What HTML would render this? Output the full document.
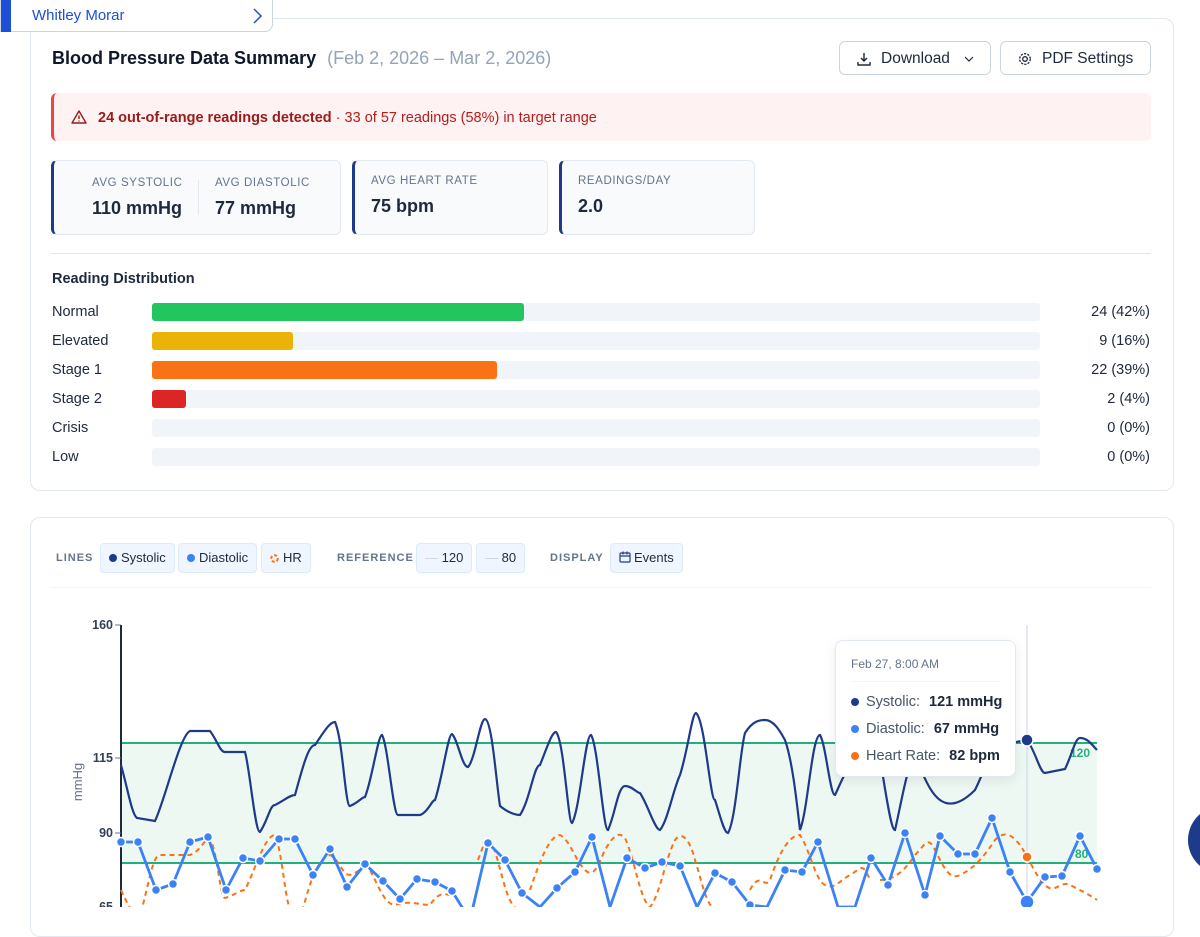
<!DOCTYPE html>
<html><head><meta charset="utf-8"><style>
*{box-sizing:border-box;margin:0;padding:0}
body{width:1200px;height:907px;overflow:hidden;background:#fff;font-family:"Liberation Sans",sans-serif;color:#1e293b;position:relative}
.abs{position:absolute}
.card{position:absolute;border:1px solid #e2e8f0;border-radius:10px;background:#fff}
.stat{position:absolute;top:160px;height:75px;border:1px solid #e2e8f0;border-left:3px solid #1e3a8a;border-radius:6px;background:#f8fafc}
.lbl{font-size:11.5px;letter-spacing:.6px;color:#64748b}
.val{font-size:18px;font-weight:bold;color:#1e293b}
.row{position:absolute;left:52px;font-size:14.5px;color:#1e293b}
.track{position:absolute;left:152px;width:888px;height:18px;background:#f1f5f9;border-radius:3px}
.bar{position:absolute;left:0;top:0;height:18px;border-radius:3px}
.cnt{position:absolute;right:50px;font-size:14.5px;color:#1e293b;text-align:right}
.chip{position:absolute;top:543px;height:30px;border:1px solid #dbeafe;background:#eff6ff;border-radius:4px;font-size:13px;color:#1e293b;line-height:28px;padding:0 8px}
.sec{position:absolute;top:552px;font-size:11px;letter-spacing:1px;color:#64748b;font-weight:bold}
.btn{position:absolute;top:41px;height:34px;border:1px solid #cbd5e1;border-radius:6px;font-size:15.5px;line-height:34px;color:#1e293b}
</style></head><body>

<div class="abs" style="left:0;top:0;width:273px;height:32px;border:1px solid #cbd5e1;border-top:none;border-radius:0 0 8px 0;background:#fff;z-index:2">
<div class="abs" style="left:0;top:0;width:10px;height:32px;background:#1d4ed8"></div>
<div class="abs" style="left:31px;top:7px;font-size:15px;color:#1d4ed8">Whitley Morar</div>
<svg class="abs" style="left:249px;top:6px" width="14" height="20" viewBox="0 0 14 20"><path d="M4 3 L11 10 L4 17" fill="none" stroke="#1d4ed8" stroke-width="1.5"/></svg>
</div>

<div class="card" style="left:30px;top:18px;width:1144px;height:473px"></div>
<div class="abs" style="left:52px;top:48px;font-size:18px;font-weight:bold;color:#0f172a">Blood Pressure Data Summary <span style="font-weight:normal;color:#94a3b8;margin-left:6px">(Feb 2, 2026 – Mar 2, 2026)</span></div>

<div class="btn" style="left:839px;width:152px">
<svg class="abs" style="left:16px;top:9px" width="16" height="16" viewBox="0 0 16 16"><path d="M8 2v8M5 7l3 3 3-3M2 11v3h12v-3" fill="none" stroke="#1e293b" stroke-width="1.4"/></svg>
<span style="position:absolute;left:41px">Download</span>
<svg class="abs" style="left:124px;top:12px" width="10" height="10" viewBox="0 0 10 10"><path d="M1 3l4 4 4-4" fill="none" stroke="#1e293b" stroke-width="1.2"/></svg></div>
<div class="btn" style="left:1000px;width:151px">
<svg class="abs" style="left:16px;top:9px" width="16" height="16" viewBox="0 0 16 16"><circle cx="8" cy="8" r="2.3" fill="none" stroke="#1e293b" stroke-width="1.3"/><circle cx="8" cy="8" r="5.3" fill="none" stroke="#1e293b" stroke-width="1.3" stroke-dasharray="2.2 1.2"/></svg>
<span style="position:absolute;left:41px">PDF Settings</span></div>

<div class="abs" style="left:51px;top:93px;width:1100px;height:48px;background:#fef2f2;border-left:3px solid #ef4444;border-radius:6px"></div>
<svg class="abs" style="left:71px;top:109px" width="16" height="16" viewBox="0 0 16 16"><path d="M8 2L15 14H1Z" fill="none" stroke="#991b1b" stroke-width="1.4" stroke-linejoin="round"/><path d="M8 6.5v3.5M8 11.5v1" stroke="#991b1b" stroke-width="1.4"/></svg>
<div class="abs" style="left:98px;top:110px;font-size:14.5px;color:#b91c1c"><b style="color:#991b1b">24 out-of-range readings detected</b> · 33 of 57 readings (58%) in target range</div>

<div class="stat" style="left:51px;width:290px"></div>
<div class="abs lbl" style="left:92px;top:177px">AVG SYSTOLIC</div>
<div class="abs val" style="left:92px;top:198px">110 mmHg</div>
<div class="abs" style="left:198px;top:180px;width:1px;height:35px;background:#e2e8f0"></div>
<div class="abs lbl" style="left:215px;top:177px">AVG DIASTOLIC</div>
<div class="abs val" style="left:215px;top:198px">77 mmHg</div>
<div class="stat" style="left:352px;width:196px"></div>
<div class="abs lbl" style="left:371px;top:175px">AVG HEART RATE</div>
<div class="abs val" style="left:371px;top:196px">75 bpm</div>
<div class="stat" style="left:559px;width:196px"></div>
<div class="abs lbl" style="left:578px;top:175px">READINGS/DAY</div>
<div class="abs val" style="left:578px;top:196px">2.0</div>

<div class="abs" style="left:51px;top:253px;width:1100px;height:1px;background:#e2e8f0"></div>
<div class="abs" style="left:52px;top:271px;font-size:14.5px;font-weight:bold;color:#1e293b">Reading Distribution</div>

<div class="row" style="top:304px">Normal</div><div class="track" style="top:303px"><div class="bar" style="width:372px;background:#22c55e"></div></div><div class="cnt" style="top:304px">24 (42%)</div>
<div class="row" style="top:333px">Elevated</div><div class="track" style="top:332px"><div class="bar" style="width:141px;background:#eab308"></div></div><div class="cnt" style="top:333px">9 (16%)</div>
<div class="row" style="top:362px">Stage 1</div><div class="track" style="top:361px"><div class="bar" style="width:345px;background:#f97316"></div></div><div class="cnt" style="top:362px">22 (39%)</div>
<div class="row" style="top:391px">Stage 2</div><div class="track" style="top:390px"><div class="bar" style="width:34px;background:#dc2626"></div></div><div class="cnt" style="top:391px">2 (4%)</div>
<div class="row" style="top:420px">Crisis</div><div class="track" style="top:419px"></div><div class="cnt" style="top:420px">0 (0%)</div>
<div class="row" style="top:449px">Low</div><div class="track" style="top:448px"></div><div class="cnt" style="top:449px">0 (0%)</div>

<div class="card" style="left:30px;top:517px;width:1144px;height:420px"></div>
<div class="sec" style="left:56px">LINES</div>
<div class="chip" style="left:100px"><span style="display:inline-block;width:8px;height:8px;border-radius:50%;background:#1e3a8a;margin-right:4px"></span>Systolic</div>
<div class="chip" style="left:178px"><span style="display:inline-block;width:8px;height:8px;border-radius:50%;background:#3b82f6;margin-right:4px"></span>Diastolic</div>
<div class="chip" style="left:261px"><svg width="9" height="9" viewBox="0 0 9 9" style="margin-right:4px;vertical-align:-1px"><circle cx="4.5" cy="4.5" r="3.3" fill="none" stroke="#f97316" stroke-width="2" stroke-dasharray="3 2"/></svg>HR</div>
<div class="sec" style="left:337px">REFERENCE</div>
<div class="chip" style="left:416px"><span style="color:#cbd5e1">—</span> 120</div>
<div class="chip" style="left:476px"><span style="color:#cbd5e1">—</span> 80</div>
<div class="sec" style="left:550px">DISPLAY</div>
<div class="chip" style="left:610px"><svg width="12" height="12" viewBox="0 0 12 12" style="vertical-align:-1px;margin-right:3px"><rect x="1" y="2" width="10" height="9" rx="1" fill="none" stroke="#1e3a8a" stroke-width="1.2"/><path d="M1 5h10M4 0.5v3M8 0.5v3" stroke="#1e3a8a" stroke-width="1.2"/></svg>Events</div>
<div class="abs" style="left:51px;top:587px;width:1100px;height:1px;background:#f1f5f9"></div>

<svg class="abs" style="left:0;top:0" width="1200" height="907">
<rect x="121" y="743" width="976" height="120" fill="#eef8f3"/>
<line x1="121" y1="743" x2="1097" y2="743" stroke="#22b07d" stroke-width="2"/>
<line x1="121" y1="863" x2="1097" y2="863" stroke="#22b07d" stroke-width="2"/>
<text x="1070" y="757" font-size="12" font-weight="bold" fill="#22b07d" font-family="Liberation Sans">120</text>
<text x="1075" y="858" font-size="12" font-weight="bold" fill="#22b07d" font-family="Liberation Sans">80</text>
<line x1="121" y1="625" x2="121" y2="907" stroke="#1e293b" stroke-width="2"/>
<g font-family="Liberation Sans" font-size="12.5" font-weight="bold" fill="#334155" text-anchor="end">
<text x="113" y="629">160</text><text x="113" y="762">115</text><text x="113" y="837">90</text><text x="113" y="911">65</text></g>
<g stroke="#64748b"><line x1="115" y1="625" x2="121" y2="625"/><line x1="115" y1="758" x2="121" y2="758"/><line x1="115" y1="833" x2="121" y2="833"/></g>
<text transform="translate(82,782) rotate(-90)" font-family="Liberation Sans" font-size="13" fill="#64748b" text-anchor="middle">mmHg</text>
<line x1="1027" y1="625" x2="1027" y2="907" stroke="#cbd5e1"/>
<path d="M121,765 C128,790 132,815 137,818 L155,821 C165,800 180,735 190,731 L210,731 C217,740 220,752 225,752 L245,752 C250,770 255,832 260,832 C268,820 270,805 275,805 C285,800 290,795 295,795 C302,770 308,745 315,745 C325,730 330,722 335,722 C343,740 345,806 350,806 C358,803 362,797 365,797 C372,780 378,735 382,735 C388,745 393,815 398,815 L420,815 C428,812 432,800 435,800 C442,780 448,734 452,734 C458,740 462,767 468,767 C475,760 480,719 485,719 C492,720 496,780 500,806 C505,810 512,815 520,815 C530,800 534,765 540,765 C548,745 552,732 556,732 C564,740 568,823 572,823 C580,810 585,735 591,735 C598,745 603,830 608,830 C615,815 618,786 625,786 C632,786 637,793 640,793 C648,805 655,830 660,830 C668,820 673,790 680,775 C688,750 692,713 696,713 C705,720 710,800 715,800 C720,815 724,833 728,833 C736,820 740,750 745,733 C752,722 758,720 765,720 C775,720 782,735 785,740 C792,760 796,795 800,830 C808,810 812,735 820,735 C826,745 830,795 835,795 C840,785 845,770 850,770 C858,760 862,720 868,715 C878,720 888,830 895,830 C902,800 908,760 915,760 C925,770 935,830 975,790 C985,770 992,745 1000,745 L1027,740 C1035,750 1040,773 1045,773 C1055,771 1060,770 1065,769 C1072,755 1075,738 1080,738 C1088,738 1092,745 1097,750" fill="none" stroke="#1e3a8a" stroke-width="2.2"/>
<path d="M121,890 C128,905 135,920 140,915 C148,890 152,855 160,855 L190,855 C200,852 205,838 210,838 C218,855 220,898 225,898 C235,895 240,890 245,890 C255,870 265,835 275,835 C282,850 286,907 290,907 M300,920 C308,890 315,860 330,855 C340,860 342,875 350,875 C360,872 365,863 370,870 C378,885 385,905 395,905 C410,900 420,905 430,905 C440,890 445,895 452,895 M478,860 C482,850 485,838 490,838 C500,860 505,900 515,907 M530,890 C540,860 550,835 560,835 C570,840 575,860 585,870 C595,880 600,860 605,850 C612,838 618,830 625,838 C635,860 640,900 650,907 C660,895 665,860 675,840 C682,830 690,840 695,860 C700,875 705,900 712,907 M750,890 C760,870 765,890 770,880 C780,850 790,835 800,835 C810,850 815,880 825,885 C835,890 840,880 850,875 C860,870 862,860 870,880 M880,880 C895,880 905,870 915,855 C925,845 928,835 935,850 C945,870 950,880 960,875 C975,868 985,855 995,840 C1005,830 1012,835 1020,845 C1030,860 1035,875 1045,885 C1055,895 1060,880 1070,885 C1080,890 1090,895 1097,900" fill="none" stroke="#f97316" stroke-width="2" stroke-dasharray="5 4"/>
<polyline points="121,842 138,842 156,890 173,884 190,842 208,837 226,890 243,858 260,861 279,839 295,839 313,875 330,849 347,887 365,864 383,881 400,899 417,879 435,882 452,891 470,920 488,843 505,860 522,893 540,907 557,888 575,872 592,837 610,907 627,858 645,868 662,862 680,866 697,907 715,873 732,882 750,905 767,907 785,870 802,872 818,842 838,907 855,907 871,858 888,885 905,833 925,895 940,836 958,854 975,854 992,818 1010,872 1027,902 1045,877 1062,876 1080,836 1097,869" fill="none" stroke="#3b82f6" stroke-width="2.8" stroke-linejoin="round"/>
<g fill="#3b82f6" stroke="#fff" stroke-width="1.5">
<circle cx="121" cy="842" r="4.5"/><circle cx="138" cy="842" r="4.5"/><circle cx="156" cy="890" r="4.5"/><circle cx="173" cy="884" r="4.5"/><circle cx="190" cy="842" r="4.5"/><circle cx="208" cy="837" r="4.5"/><circle cx="226" cy="890" r="4.5"/><circle cx="243" cy="858" r="4.5"/><circle cx="260" cy="861" r="4.5"/><circle cx="279" cy="839" r="4.5"/><circle cx="295" cy="839" r="4.5"/><circle cx="313" cy="875" r="4.5"/><circle cx="330" cy="849" r="4.5"/><circle cx="347" cy="887" r="4.5"/><circle cx="365" cy="864" r="4.5"/><circle cx="383" cy="881" r="4.5"/><circle cx="400" cy="899" r="4.5"/><circle cx="417" cy="879" r="4.5"/><circle cx="435" cy="882" r="4.5"/><circle cx="452" cy="891" r="4.5"/><circle cx="488" cy="843" r="4.5"/><circle cx="505" cy="860" r="4.5"/><circle cx="522" cy="893" r="4.5"/><circle cx="557" cy="888" r="4.5"/><circle cx="575" cy="872" r="4.5"/><circle cx="592" cy="837" r="4.5"/><circle cx="627" cy="858" r="4.5"/><circle cx="645" cy="868" r="4.5"/><circle cx="662" cy="862" r="4.5"/><circle cx="680" cy="866" r="4.5"/><circle cx="715" cy="873" r="4.5"/><circle cx="732" cy="882" r="4.5"/><circle cx="750" cy="905" r="4.5"/><circle cx="785" cy="870" r="4.5"/><circle cx="802" cy="872" r="4.5"/><circle cx="818" cy="842" r="4.5"/><circle cx="871" cy="858" r="4.5"/><circle cx="888" cy="885" r="4.5"/><circle cx="905" cy="833" r="4.5"/><circle cx="925" cy="895" r="4.5"/><circle cx="940" cy="836" r="4.5"/><circle cx="958" cy="854" r="4.5"/><circle cx="975" cy="854" r="4.5"/><circle cx="992" cy="818" r="4.5"/><circle cx="1010" cy="872" r="4.5"/><circle cx="1027" cy="902" r="7"/><circle cx="1045" cy="877" r="4.5"/><circle cx="1062" cy="876" r="4.5"/><circle cx="1080" cy="836" r="4.5"/><circle cx="1097" cy="869" r="4.5"/></g>
<circle cx="1027" cy="740" r="6" fill="#1e3a8a" stroke="#fff" stroke-width="1.5"/>
<circle cx="1027" cy="857" r="5" fill="#f97316" stroke="#fff" stroke-width="1.5"/>
<circle cx="1222" cy="840" r="34" fill="#1e3a8a"/>
</svg>

<div class="abs" style="left:835px;top:640px;width:181px;height:137px;background:#fff;border:1px solid #e2e8f0;border-radius:8px;box-shadow:0 4px 12px rgba(0,0,0,.08);font-size:14.5px">
<div class="abs" style="left:15px;top:16px;font-size:12px;color:#64748b">Feb 27, 8:00 AM</div>
<div class="abs" style="left:15px;top:40px;width:150px;height:1px;background:#f1f5f9"></div>
<div class="abs" style="left:15px;top:53px;color:#475569;white-space:nowrap"><span style="display:inline-block;width:8px;height:8px;border-radius:50%;background:#1e3a8a;margin-right:7px"></span>Systolic: <b style="color:#1e293b;margin-left:5px">121 mmHg</b></div>
<div class="abs" style="left:15px;top:80px;color:#475569;white-space:nowrap"><span style="display:inline-block;width:8px;height:8px;border-radius:50%;background:#3b82f6;margin-right:7px"></span>Diastolic: <b style="color:#1e293b;margin-left:5px">67 mmHg</b></div>
<div class="abs" style="left:15px;top:107px;color:#475569;white-space:nowrap"><span style="display:inline-block;width:8px;height:8px;border-radius:50%;background:#f97316;margin-right:7px"></span>Heart Rate: <b style="color:#1e293b;margin-left:5px">82 bpm</b></div>
</div>
</body></html>
